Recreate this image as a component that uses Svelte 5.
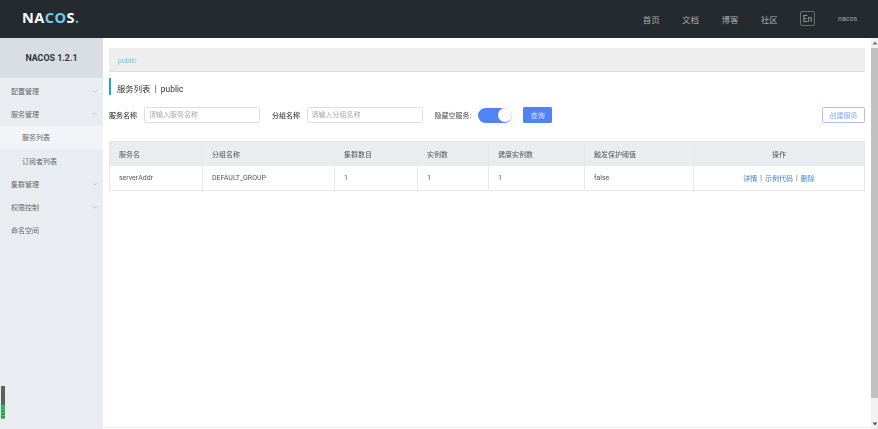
<script>
  const nav = ['首页', '文档', '博客', '社区'];
  const side = [
    { t: '配置管理', c: 'down' },
    { t: '服务管理', c: 'up' },
    { t: '服务列表', sub: true, active: true },
    { t: '订阅者列表', sub: true },
    { t: '集群管理', c: 'down' },
    { t: '权限控制', c: 'down' },
    { t: '命名空间' }
  ];
  const heads = ['服务名', '分组名称', '集群数目', '实例数', '健康实例数', '触发保护阈值', '操作'];
  const row = ['serverAddr', 'DEFAULT_GROUP', '1', '1', '1', 'false'];
</script>

<div class="page">
  <header class="top">
    <div class="logo">NA<span class="co">CO</span>S<span class="dot">.</span></div>
    <nav class="nav">
      {#each nav as n}<span class="nav-item">{n}</span>{/each}
      <span class="lang">En</span>
      <span class="user">nacos</span>
    </nav>
  </header>
  <div class="body">
    <aside class="side">
      <div class="ver">NACOS 1.2.1</div>
      <div class="menu">
        {#each side as s}
          <div class="mi" class:sub={s.sub} class:active={s.active}>
            <span>{s.t}</span>
            {#if s.c}
              <svg class="chev" viewBox="0 0 6 4" width="6" height="4">
                <path d={s.c === 'down' ? 'M.5 .8 3 3.2 5.5 .8' : 'M.5 3.2 3 .8 5.5 3.2'} fill="none" stroke="#b4b9c0" stroke-width=".7" />
              </svg>
            {/if}
          </div>
        {/each}
      </div>
      <div class="meter"><div class="meter-fill"></div></div>
    </aside>
    <main class="main">
      <div class="crumb">public</div>
      <div class="title">服务列表&nbsp;&nbsp;|&nbsp;&nbsp;public</div>
      <div class="form">
        <span class="lab">服务名称</span>
        <input class="inp" placeholder="请输入服务名称" />
        <span class="lab second">分组名称</span>
        <input class="inp inp2" placeholder="请输入分组名称" />
        <span class="lab third">隐藏空服务:</span>
        <span class="switch"><span class="knob"></span></span>
        <button class="query">查询</button>
        <button class="create">创建服务</button>
      </div>
      <div class="table">
        {#each heads as h, i}<div class="th" class:center={i === 6}>{h}</div>{/each}
        {#each row as c}<div class="td">{c}</div>{/each}
        <div class="td center links"><a href="#a">详情</a><i>|</i><a href="#b">示例代码</a><i>|</i><a href="#c">删除</a></div>
      </div>
    </main>
    <div class="scroll">
      <svg class="arrow" viewBox="0 0 6 4" width="6" height="4"><path d="M3 .5 5.5 3.5H.5z" fill="#777" /></svg>
      <div class="thumb"></div>
      <svg class="arrow" viewBox="0 0 6 4" width="6" height="4"><path d="M3 3.5 5.5 .5H.5z" fill="#555" /></svg>
    </div>
  </div>
</div>

<style>
  :global(body) { margin: 0; background: #fff; overflow: hidden; }
  .page {
    width: 878px; height: 429px; display: flex; flex-direction: column;
    font-family: Roboto, "Noto Sans CJK SC", sans-serif; font-size: 7px; color: #444;
    filter: blur(0.35px);
  }
  .top {
    height: 38px; flex: none; background: #252a2f; display: flex; align-items: center;
    justify-content: space-between; padding: 0 21px 0 22px;
  }
  .logo { font-family: "Open Sans", sans-serif; font-size: 14.5px; font-weight: 700; color: #fff; letter-spacing: .5px; margin-top: -3px; }
  .co { color: #6fcdee; }
  .dot { color: #2fc1d8; }
  .nav { display: flex; align-items: center; color: #a7a9ab; font-size: 8.5px; margin-top: -1px; }
  .nav-item { margin-right: 22.3px; }
  .lang { width: 13px; height: 13px; border: 1px solid #6a6e72; border-radius: 2px; display: flex; align-items: center; justify-content: center; margin-right: 23px; box-sizing: content-box; font-size: 8.5px; }
  .user { font-size: 7px; }
  .body { flex: 1; display: flex; min-height: 0; }
  .side { width: 103px; flex: none; background: #e9edf2; display: flex; flex-direction: column; }
  .ver { height: 40px; flex: none; background: #d9dee4; display: flex; align-items: center; justify-content: center; font-size: 8.9px; font-weight: 700; color: #333; }
  .menu { padding-top: 1.5px; }
  .mi { height: 23.2px; display: flex; align-items: center; justify-content: space-between; padding: 0 5px 0 11px; color: #666; font-size: 7px; }
  .mi.sub { padding-left: 22px; }
  .mi.active { background: #f2f4f7; }
  .chev { display: block; }
  .meter { margin: auto 0 10px 1px; width: 4px; height: 33px; background: #5b5f5e; display: flex; align-items: flex-end; }
  .meter-fill { width: 100%; height: 15px; background: repeating-linear-gradient(#2f9e4f 0 2px, #4ec46f 2px 3px); }
  .main { flex: 1; min-width: 0; padding: 10px 6px 0 6px; margin-bottom: 1px; border-bottom: 1px solid #efefef; }
  .crumb { height: 23px; background: #eee; border-bottom: 1px solid #dcdcdc; line-height: 27px; padding-left: 9px; color: #5ec8e6; font-size: 7px; }
  .title { margin-top: 6px; height: 17px; border-left: 2.5px solid #1ca6d6; padding-left: 6px; line-height: 23px; font-size: 8.4px; color: #333; box-sizing: border-box; }
  .form { display: flex; align-items: center; height: 16px; margin-top: 12px; }
  .lab { color: #444; font-size: 7px; font-weight: 500; white-space: nowrap; }
  .inp { width: 116px; height: 16px; box-sizing: border-box; border: 1px solid #dcdee3; border-radius: 1.5px; padding: 0 4px; margin-left: 7px; font: inherit; font-size: 7px; outline: none; background: #fff; }
  .inp2 { margin-left: 6.5px; width: 116.5px; }
  .inp::placeholder { color: #a8a8a8; opacity: 1; }
  .second { margin-left: 12px; }
  .third { margin-left: 11.5px; color: #666; }
  .switch { width: 34px; height: 15px; border-radius: 8px; background: #5084f5; margin-left: 7px; position: relative; flex: none; }
  .knob { position: absolute; right: 0.5px; top: 0.5px; width: 14px; height: 14px; background: #fff; border-radius: 50%; }
  .query { width: 29px; height: 16px; margin-left: 11px; background: #5084f5; color: #dbe6fd; border: none; border-radius: 1.5px; font: inherit; font-size: 7px; padding: 0; }
  .create { margin-left: auto; width: 43px; height: 16px; background: #fff; border: 1px solid #a9c1fc; color: #88a8f6; border-radius: 1.5px; font: inherit; font-size: 7px; padding: 0; }
  .table {
    margin-top: 18px; display: grid; grid-template-columns: 93px 132px 83px 71px 96px 109px 1fr;
    grid-template-rows: 25px 24px; border: 1px solid #e6e7eb; border-width: 0 1px 1px 1px; box-sizing: border-box;
    width: 756px;
  }
  .th, .td { display: flex; align-items: center; padding-left: 9px; border-right: 1px solid #e6e7eb; box-sizing: border-box; font-size: 7px; color: #555; }
  .th { background: #ebecf0; border-top: 1px solid #e3e4e8; }
  .th:nth-child(7), .td:last-child { border-right: 0; }
  .center { justify-content: center; padding-left: 0; }
  .links { color: #666; gap: 3px; }
  .links a { color: #3f83cc; text-decoration: none; }
  .links i { font-style: normal; color: #555; }
  .scroll { width: 7px; flex: none; background: #f1f1f1; display: flex; flex-direction: column; align-items: center; }
  .arrow { flex: none; margin: 3px 0 3px; }
  .thumb { flex: 1; width: 100%; background: #c1c1c1; margin-bottom: 21px; }
</style>
